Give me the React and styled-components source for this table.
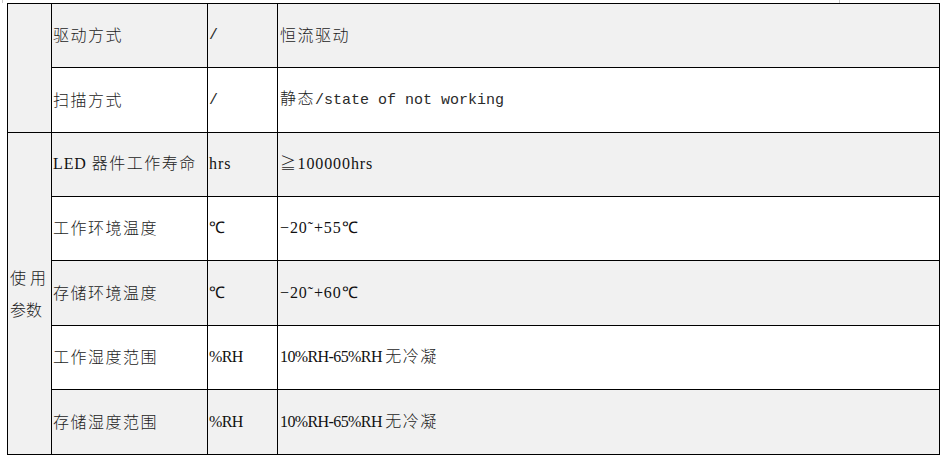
import React from "react";
import styled, { createGlobalStyle } from "styled-components";

const GlobalStyle = createGlobalStyle`
  html, body {
    margin: 0;
    padding: 0;
    background: #fff;
  }
  body {
    font-family: "Noto Sans CJK SC", "Liberation Serif", serif;
    font-size: 16px;
    color: #1c1c1c;
  }
`;

const rows = [
  { name: "驱动方式", unit: <Mono>/</Mono>, value: <>恒流驱动</> },
  {
    name: "扫描方式",
    unit: <Mono>/</Mono>,
    value: (
      <>
        静态<Mono>/state of not working</Mono>
      </>
    ),
  },
  {
    name: (
      <>
        <Serif>LED </Serif>器件工作寿命
      </>
    ),
    unit: <Serif>hrs</Serif>,
    value: (
      <>
        ≧<Serif>100000hrs</Serif>
      </>
    ),
  },
  {
    name: "工作环境温度",
    unit: <Serif>℃</Serif>,
    value: <Serif>−20˜+55℃</Serif>,
  },
  {
    name: "存储环境温度",
    unit: <Serif>℃</Serif>,
    value: <Serif>−20˜+60℃</Serif>,
  },
  {
    name: "工作湿度范围",
    unit: <Serif $tight>%RH</Serif>,
    value: (
      <>
        <Serif $tight>10%RH-65%RH </Serif>无冷凝
      </>
    ),
  },
  {
    name: "存储湿度范围",
    unit: <Serif $tight>%RH</Serif>,
    value: (
      <>
        <Serif $tight>10%RH-65%RH </Serif>无冷凝
      </>
    ),
  },
];

const heights = [64, 65, 64, 64, 65, 64, 65];

function Mono({ children }) {
  return <MonoText>{children}</MonoText>;
}

function Serif({ children, $tight }) {
  return <SerifText $tight={$tight}>{children}</SerifText>;
}

export default function App() {
  return (
    <>
      <GlobalStyle />
      <Page>
        <Ruler>
          <Tick />
          <Tick $gap={836} />
        </Ruler>
        <SpecTable>
          <colgroup>
            <col style={{ width: 44 }} />
            <col style={{ width: 156 }} />
            <col style={{ width: 70 }} />
            <col />
          </colgroup>
          <tbody>
            {rows.map((row, i) => (
              <Row key={i} $height={heights[i]} $shaded={i % 2 === 0}>
                {i === 0 && <GroupCell rowSpan={2} />}
                {i === 2 && (
                  <GroupCell rowSpan={5}>
                    <GroupLabel>使用参数</GroupLabel>
                  </GroupCell>
                )}
                <NameCell>{row.name}</NameCell>
                <UnitCell>{row.unit}</UnitCell>
                <ValueCell>{row.value}</ValueCell>
              </Row>
            ))}
          </tbody>
        </SpecTable>
      </Page>
    </>
  );
}

const Page = styled.div`
  padding-left: 7px;
  width: 933px;
`;

const Ruler = styled.div`
  display: flex;
  height: 3px;
  margin-left: -5px;
`;

const Tick = styled.span`
  width: 1px;
  height: 3px;
  background: #c8c8c8;
  margin-left: ${(p) => p.$gap || 0}px;
`;

const SpecTable = styled.table`
  width: 933px;
  table-layout: fixed;
  border-collapse: collapse;
  border: 1px solid #000;
`;

const Row = styled.tr`
  height: ${(p) => p.$height}px;
  background: ${(p) => (p.$shaded ? "#f1f1f1" : "#fff")};
`;

const Cell = styled.td`
  border: 1px solid #000;
  padding: 0 0 3px 1px;
  vertical-align: middle;
  letter-spacing: 1.5px;
  line-height: 20px;
  white-space: nowrap;
  font-weight: 300;
`;

const GroupCell = styled(Cell)`
  background: #f1f1f1;
  padding: 0 5px 2px 2px;
  white-space: normal;
`;

const GroupLabel = styled.div`
  text-align: justify;
  text-align-last: left;
  line-height: 32px;
  letter-spacing: 0;
  word-break: break-all;
`;

const NameCell = styled(Cell)``;

const UnitCell = styled(Cell)``;

const ValueCell = styled(Cell)`
  padding-left: 2px;
`;

const MonoText = styled.span`
  font-family: "Liberation Mono", monospace;
  font-size: 15px;
  letter-spacing: 0;
  color: #2a2a2a;
`;

const SerifText = styled.span`
  font-family: "Liberation Serif", serif;
  font-weight: 400;
  letter-spacing: ${(p) => (p.$tight ? "-0.6px" : "0.9px")};
  color: #111;
`;
